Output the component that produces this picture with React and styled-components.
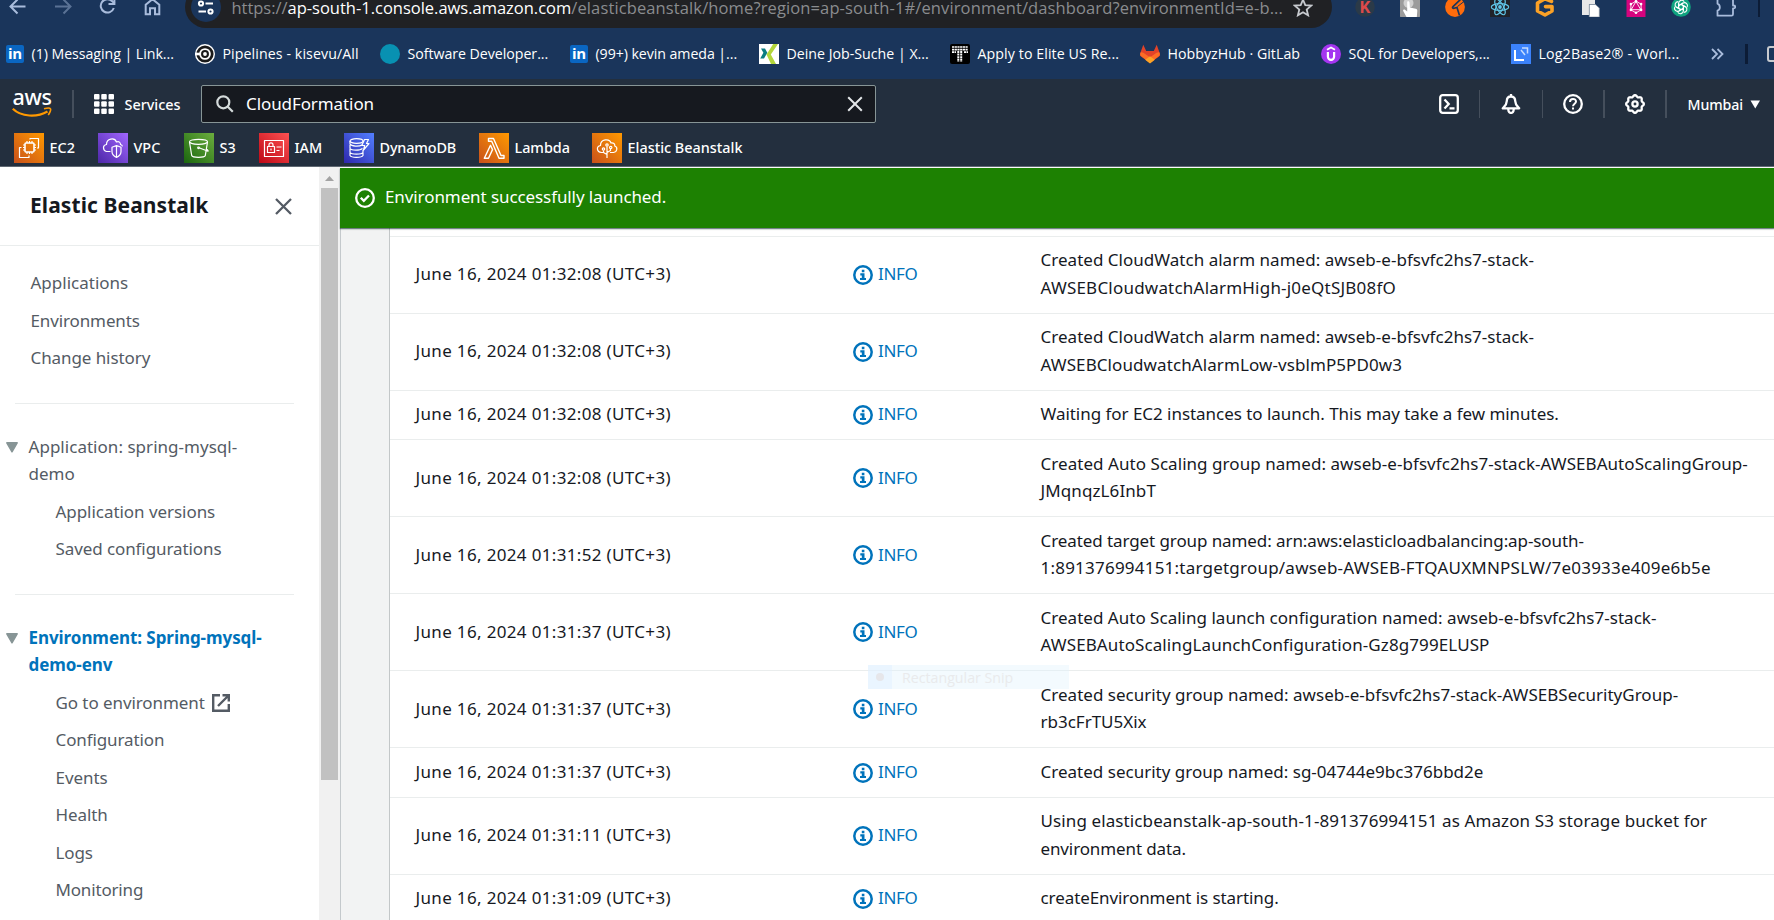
import React from "react";
import styled, { createGlobalStyle, css } from "styled-components";

const GlobalStyle = createGlobalStyle`
  * { box-sizing: border-box; }
  body { margin: 0; background: #fff; overflow: hidden; }
  svg { display: block; flex: none; }
`;

const ember = `"Noto Sans", "Open Sans", sans-serif`;
const segoe = `"Open Sans", "Noto Sans", sans-serif`;

const Page = styled.div`
  position: relative;
  display: flex;
  flex-direction: column;
  width: 1774px;
  height: 920px;
  overflow: hidden;
  background: #fff;
  font-family: ${ember};
`;

const Spaced = styled.span`
  letter-spacing: ${(p) => p.$ls || 0}px;
`;

/* ---------- browser chrome ---------- */

const Toolbar = styled.div`
  flex: none;
  height: 28px;
  overflow: hidden;
  background: #1a355b;
`;

const ToolbarRow = styled.div`
  display: flex;
  align-items: center;
  height: 42px;
  margin-top: -14px;
  padding-left: 8px;
`;

const NavButtons = styled.div`
  display: flex;
  align-items: center;
  gap: 25px;
  width: 177px;
`;

const AddressBar = styled.div`
  display: flex;
  align-items: center;
  width: 1147px;
  height: 42px;
  padding: 0 19px 0 6px;
  border-radius: 21px;
  background: #202124;
  color: #8a8c8f;
  font: 16.5px/42px ${segoe};
  white-space: nowrap;
`;

const SiteInfo = styled.div`
  display: grid;
  place-items: center;
  width: 30px;
  height: 30px;
  margin-right: 10.5px;
  border-radius: 50%;
  background: #1a355b;
`;

const Url = styled.div`
  flex: 1;
  padding-top: 1px;
`;

const Host = styled(Spaced)`
  color: #fff;
`;

const Extensions = styled.div`
  display: flex;
  align-items: center;
  gap: 25.1px;
  margin-left: 23px;
`;

const ToolbarRule = styled.div`
  width: 2px;
  height: 20px;
  margin-left: -3px;
  background: #0c1c36;
`;

const Bookmarks = styled.div`
  flex: none;
  display: flex;
  align-items: center;
  height: 51px;
  padding: 1px 0 0 6px;
  background: #1a355b;
  color: #fff;
  overflow: hidden;
`;

const Bookmark = styled.div`
  flex: 0 0 ${(p) => p.$w}px;
  display: flex;
  align-items: center;
  gap: 7.5px;
  font: 14.2px/20px ${segoe};
  letter-spacing: ${(p) => p.$ls}px;
  white-space: nowrap;
`;

const BookmarkRule = styled.div`
  flex: none;
  width: 3px;
  height: 20px;
  margin: 0 19px 0 21px;
  background: #0c1c36;
`;

const LinkedInBadge = styled.div`
  flex: none;
  width: 18px;
  height: 18px;
  border-radius: 2px;
  background: #0a66c2;
  color: #fff;
  font: 700 15px/16px "Open Sans", sans-serif;
  letter-spacing: -0.3px;
  text-align: center;
`;

/* ---------- AWS header ---------- */

const AwsHeader = styled.header`
  flex: none;
  height: 88px;
  background: #232f3e;
  border-bottom: 1px solid #5f6872;
  color: #fff;
`;

const AwsBar = styled.div`
  display: flex;
  align-items: center;
  height: 50px;
  padding: 0 14px 0 12px;
`;

const Logo = styled.div`
  display: flex;
  flex-direction: column;
  align-items: center;
  width: 40px;
  height: 34px;
  margin-top: -2px;
  font: 500 21.5px/21px ${ember};
  letter-spacing: -0.3px;
`;

const Rule = styled.div`
  width: ${(p) => p.$w || 1}px;
  height: 28px;
  margin: ${(p) => p.$m};
  background: #454f5c;
`;

const ServicesMenu = styled.div`
  display: flex;
  align-items: center;
  gap: 10.5px;
  width: 107px;
  font: 500 14.4px/20px ${ember};
`;

const ServicesLabel = styled.span`
  padding-top: 2px;
`;

const SearchBox = styled.div`
  display: flex;
  align-items: center;
  gap: 12px;
  width: 675px;
  height: 38px;
  padding: 0 12.5px 0 14px;
  border: 1px solid #879596;
  border-radius: 2px;
  background: #16191f;
  font: 17px/20px ${ember};
`;

const SearchText = styled(Spaced)`
  flex: 1;
`;

const Utilities = styled.div`
  display: flex;
  align-items: center;
  margin-left: auto;
  font: 500 14.2px/20px ${ember};
`;

const Region = styled(Spaced)`
  padding-top: 2px;
`;

const Favorites = styled.div`
  display: flex;
  height: 37px;
  padding: 4px 0 0 14px;
`;

const Favorite = styled.div`
  display: flex;
  align-items: center;
  gap: 5.5px;
  width: ${(p) => p.$w}px;
  height: 30px;
  font: 500 14.4px/20px ${ember};
  letter-spacing: ${(p) => p.$ls}px;
  white-space: nowrap;
`;

const Tile = styled.svg.attrs({ width: 30, height: 30, viewBox: "0 0 30 30", fill: "none", stroke: "#fff", strokeWidth: 1.2, strokeLinejoin: "round" })`
  background: linear-gradient(45deg, ${(p) => p.$from}, ${(p) => p.$to});
`;

/* ---------- body ---------- */

const Body = styled.div`
  flex: 1;
  display: flex;
  min-height: 0;
`;

const Sidebar = styled.nav`
  flex: none;
  width: 319px;
  color: #545b64;
  font: 17px/27.5px ${ember};
`;

const SideHeader = styled.div`
  display: flex;
  align-items: center;
  justify-content: space-between;
  height: 79px;
  padding: 0 27.5px 0 30px;
  border-bottom: 1px solid #eaeded;
  color: #16191f;
  font-size: 21px;
  font-weight: 700;
`;

const SideList = styled.div`
  display: flex;
  flex-direction: column;
  gap: 10px;
  padding: ${(p) => p.$p};
`;

const SideItem = styled.div`
  display: flex;
  align-items: center;
  gap: 7px;
  letter-spacing: ${(p) => p.$ls}px;
  white-space: nowrap;
`;

const SideRule = styled.div`
  height: 1px;
  margin: 0 25px 29px 15px;
  background: #eaeded;
`;

const Section = styled.div`
  display: flex;
  gap: 10.5px;
  padding: 0 20px 0 6px;
  letter-spacing: ${(p) => p.$ls}px;
  ${(p) => p.$active && css`
    color: #0073bb;
    font-weight: 700;
  `}
`;

const Caret = styled.svg`
  margin-top: 9.5px;
`;

const Scrollbar = styled.div`
  flex: none;
  width: 21px;
  background: #f1f1f1;
  padding: 9px 2px 0;
`;

const Thumb = styled.div`
  width: 17px;
  height: 592px;
  margin-top: 7px;
  background: #c1c1c1;
`;

const Main = styled.main`
  flex: 1;
  display: flex;
  flex-direction: column;
  min-width: 0;
  padding-top: 1px;
`;

const Banner = styled.div`
  position: relative;
  flex: none;
  display: flex;
  align-items: center;
  gap: 10px;
  height: 60px;
  padding-left: 15px;
  background: #1d8102;
  color: #fff;
  box-shadow: 0 1px 1px rgba(0, 28, 36, 0.45), 0 1px 2px rgba(0, 28, 36, 0.25);
  font: 17px/27px ${ember};
`;

const BannerText = styled(Spaced)`
  padding-bottom: 3px;
`;

const Content = styled.div`
  flex: 1;
  min-height: 0;
  padding-left: 48px;
  border-left: 1px solid #c4c9cc;
  background: #f2f3f3;
`;

const Card = styled.div`
  height: 100%;
  padding-top: 7.75px;
  border-left: 1px solid #c3c7c8;
  background: #fff;
`;

const EventRow = styled.div`
  display: grid;
  grid-template-columns: 437.5px 187.5px 1fr;
  align-items: center;
  padding: 9.7px 0 11.3px 25.5px;
  border-top: 1px solid #eaeded;
  color: #16191f;
  font: 17px/27.5px ${ember};
  white-space: nowrap;
`;

const Level = styled.div`
  display: flex;
  align-items: center;
  gap: 5px;
  color: #0073bb;
  letter-spacing: -0.37px;

  svg {
    margin-top: 2px;
  }
`;

const Line = styled.div`
  letter-spacing: ${(p) => p.$ls}px;
`;

const GhostMenu = styled.div`
  position: absolute;
  left: 868px;
  top: 665px;
  display: flex;
  align-items: center;
  width: 201px;
  height: 24px;
  padding-top: 1px;
  background: rgba(225, 242, 252, 0.4);
  color: #e9eaec;
  font: 14.2px/24px ${segoe};
`;

const GhostIcon = styled.div`
  display: grid;
  place-items: center;
  width: 24px;
  height: 24px;
  margin: -1px 10px 0 0;
  background: rgba(225, 240, 255, 0.5);
`;

const GhostDot = styled.i`
  width: 8px;
  height: 8px;
  border-radius: 50%;
  background: #e6e6ea;
`;

/* ---------- icons ---------- */

const chromeStroke = { fill: "none", stroke: "#a9bcdc", strokeWidth: 2 };

const BackIcon = ({ dim }) => (
  <svg width="20" height="20" viewBox="0 0 20 20" {...chromeStroke} opacity={dim ? 0.45 : 1}>
    {dim ? <path d="M2 9.5h15M10.5 2.5l7 7-7 7" /> : <path d="M17.500 9.5H3M9.5 2.5l-7 7 7 7" />}
  </svg>
);
const ReloadIcon = () => (
  <svg width="20" height="20" viewBox="0 0 20 20" {...chromeStroke}>
    <path d="M15.800 11A6.700 6.700 0 1 1 14.300 4.200L16.600 6.500" /><path d="M16.400 1V7H10.500" />
  </svg>
);
const HomeIcon = () => (
  <svg width="20" height="20" viewBox="0 0 20 20" {...chromeStroke}>
    <path d="M2.700 17.200V7.800L9.500 2.2l6.800 5.600v9.400h-4.300v-6h-5v6z" />
  </svg>
);
const TuneIcon = () => (
  <svg width="18" height="18" viewBox="0 0 18 18" fill="none" stroke="#fff" strokeWidth="2">
    <circle cx="4" cy="5.500" r="2.1" /><path d="M8.500 5.500H16M1.500 13.500H9" /><circle cx="13.500" cy="13.500" r="2.100" />
  </svg>
);
const StarIcon = () => (
  <svg width="20" height="20" viewBox="0 0 20 20" fill="none" stroke="#c7cacf" strokeWidth="1.8">
    <path d="M10 2.700l2.300 5.400 5.900.5-4.500 3.900 1.400 5.800L10 15.200l-5.100 3.100 1.400-5.800L1.800 8.600l5.900-.5z" />
  </svg>
);
const Ext = ({ children }) => <svg width="20" height="20" viewBox="0 0 20 20">{children}</svg>;

const ExtensionIcons = () => (
  <Extensions>
    <Ext>
      <circle cx="10" cy="10" r="9.800" fill="#2b3a48" />
      <text x="10" y="16" textAnchor="middle" fontFamily="Roboto" fontWeight="700" fontSize="16.500" fill="#dc4a4a">K</text>
    </Ext>
    <Ext>
      <rect width="20" height="20.500" rx="1.500" fill="#9b9b9b" />
      <circle cx="8.500" cy="6" r="5" fill="#d0d0d0" />
      <path d="M7.200 4.800c.8-.8 2.200-.5 2.300.8l.4 4.800 5.800 1.300c1.200.3 1.700 1 1.600 2.200l-.5 6.100H6.500l-3.300-6c-.5-1.200.9-1.900 1.800-1.200l2.200 1.700z" fill="#fff" />
    </Ext>
    <Ext>
      <circle cx="10" cy="10" r="9.900" fill="#ff6c0c" />
      <path d="M15.500 2.500L8 9.600c-1 1 0 2 1 1.700l3-.8 2.500 8" fill="none" stroke="#1a355b" strokeWidth="1.700" />
      <path d="M12.500 9.500L19 4.500" fill="none" stroke="#1a355b" strokeWidth="1" />
    </Ext>
    <Ext>
      <rect y="-.5" width="20" height="21" rx="1.500" fill="#20232a" />
      <g fill="none" stroke="#61c7e8" strokeWidth="1.200">
        <ellipse cx="10" cy="10" rx="8.700" ry="3.400" />
        <ellipse cx="10" cy="10" rx="8.700" ry="3.400" transform="rotate(60 10 10)" />
        <ellipse cx="10" cy="10" rx="8.700" ry="3.400" transform="rotate(120 10 10)" />
      </g>
      <circle cx="10" cy="10" r="1.900" fill="#61c7e8" />
    </Ext>
    <Ext>
      <path d="M16.500 4.400L10 1.800 2.500 6v8L10 18l7-4V9.600h-6.500" fill="none" stroke="#fba126" strokeWidth="3.600" strokeLinejoin="round" strokeLinecap="round" />
    </Ext>
    <Ext>
      <path d="M2 2h4.500V0h4v2H15v5H9v11H2z" fill="#e8e8e8" />
      <path d="M9.300 7.500h6l4 3.500v9h-10z" fill="#fff" stroke="#8d96a3" strokeWidth=".7" />
    </Ext>
    <Ext>
      <rect x=".5" y="-.5" width="19" height="21" fill="#d6047e" />
      <path d="M10 4.200l5.100 2.900v5.800L10 15.800l-5.100-2.900V7.100zM10 4.500l4.800 8.200H5.200z" fill="none" stroke="#fff" strokeWidth=".9" />
      <g fill="#fff"><circle cx="10" cy="4.200" r="1.300" /><circle cx="15.100" cy="7.100" r="1.300" /><circle cx="15.100" cy="12.900" r="1.300" /><circle cx="10" cy="15.800" r="1.300" /><circle cx="4.900" cy="12.900" r="1.300" /><circle cx="4.900" cy="7.100" r="1.300" /></g>
    </Ext>
    <Ext>
      <circle cx="10" cy="10" r="9.800" fill="#0fa37f" />
      <g fill="none" stroke="#fff" strokeWidth="1.100">
        {[0, 60, 120, 180, 240, 300].map((a) => (
          <path key={a} transform={`rotate(${a} 10 10)`} d="M7.600 11.400V6.200a3 3 0 0 1 5.600-1.400M7.600 8.700l4.600-2.600" />
        ))}
      </g>
    </Ext>
    <Ext>
      <path d="M1.500 1H15.500a1.500 1.500 0 0 1 1.500 1.500V8.500h.8a1.300 1.300 0 0 1 0 2.800H17v5.900a1.500 1.500 0 0 1-1.500 1.500H1.500v-5a3.800 3.800 0 0 0 0-7z" fill="none" stroke="#a9bcdc" strokeWidth="1.800" strokeLinejoin="round" />
    </Ext>
    <ToolbarRule />
  </Extensions>
);

const LinkedIn = () => <LinkedInBadge>in</LinkedInBadge>;

const CircleCi = () => (
  <Ext>
    <circle cx="10" cy="10" r="10" fill="#fff" />
    <circle cx="10" cy="10" r="8.600" fill="#1a1a1a" />
    <circle cx="10" cy="10" r="4.900" fill="none" stroke="#fff" strokeWidth="1.900" />
    <path d="M0 8.700h6v2.600H0z" fill="#fff" />
    <circle cx="10" cy="10" r="1.900" fill="#fff" />
  </Ext>
);
const Xing = () => (
  <Ext>
    <rect width="20" height="20" fill="#fff" />
    <path d="M14.200 0H19L11.800 10.500 17 20h-5L7.500 10.500z" fill="#b3d63b" />
    <path d="M2 4.500h4L8.300 8.700 5 14.500H1.200L4.400 8.700z" fill="#0b7d81" />
  </Ext>
);
const Turing = () => (
  <Ext>
    <rect width="20" height="20" rx="2" fill="#000" />
    <g stroke="#fff" fill="none">
      <path d="M2 3h16M2 5.600h16M2 8.200h4M14 8.200h4" strokeWidth="1.700" strokeDasharray="2.200 .5" />
      <path d="M8.300 7v11M11.200 7v11" strokeWidth="2" strokeDasharray="2 .6" />
    </g>
  </Ext>
);
const GitLab = () => (
  <Ext>
    <path d="M10 19L1 12.500c-1-.8-1.200-2-.8-3.300L3.300.8 6.200 7h7.600L16.700.8l3.100 8.400c.4 1.300.2 2.500-.8 3.300z" fill="#e24329" />
    <path d="M10 19L.4 11.500C0 10 .3 8.500 1 8.200c2 0 3.500 1 9 5.300 5.500-4.300 7-5.300 9-5.300.7.300 1 1.800.6 3.300z" fill="#fc6d26" />
    <path d="M10 19.500l-4.800-3.800L10 12.200l4.800 3.500z" fill="#fca326" />
  </Ext>
);
const Udemy = () => (
  <Ext>
    <circle cx="10" cy="10" r="10" fill="#a435f0" />
    <path d="M6.900 8v4.700a3.100 3.100 0 0 0 6.200 0V8" fill="none" stroke="#fff" strokeWidth="2.200" />
    <path d="M6 5.800L10 3.400l4 2.400" fill="none" stroke="#fff" strokeWidth="1.700" />
  </Ext>
);
const LogBase = () => (
  <Ext>
    <rect width="20" height="20" fill="#3b82fb" />
    <path d="M4 6v10h9" fill="none" stroke="#fff" strokeWidth="2" />
    <path d="M11 4h5.500v5.500M10 6l4 5" fill="none" stroke="#c5dcff" strokeWidth="1.500" />
  </Ext>
);

const bookmarks = [
  { icon: <LinkedIn />, text: "(1) Messaging | Link...", w: 189, ls: -0.05 },
  { icon: <CircleCi />, text: "Pipelines - kisevu/All", w: 185, ls: 0.09 },
  { icon: <Ext><circle cx="10" cy="10" r="10" fill="#0891b2" /></Ext>, text: "Software Developer...", w: 190, ls: -0.04 },
  { icon: <LinkedIn />, text: "(99+) kevin ameda |...", w: 189, ls: -0.07 },
  { icon: <Xing />, text: "Deine Job-Suche | X...", w: 191, ls: 0 },
  { icon: <Turing />, text: "Apply to Elite US Re...", w: 190, ls: 0.09 },
  { icon: <GitLab />, text: "HobbyzHub · GitLab", w: 181, ls: 0.03 },
  { icon: <Udemy />, text: "SQL for Developers,...", w: 190, ls: -0.04 },
  { icon: <LogBase />, text: "Log2Base2® - Worl...", w: 200, ls: 0.16 },
];

const favorites = [
  {
    name: "EC2", w: 84, from: "#c8511b", to: "#ff9900",
    art: (
      <>
        <rect x="11" y="10" width="9" height="9" rx="1" strokeWidth="1.600" />
        <path d="M13 8v2M15.500 8v2M18 8v2M13 19v2M15.500 19v2M18 19v2M9 12h2M9 14.500h2M9 17h2M20 12h2M20 14.500h2M20 17h2" />
        <path d="M16 6.500V5.500H24.500V15H23M7.500 14.500H5.500V24.500H15V22.500" />
      </>
    ),
  },
  {
    name: "VPC", w: 86, from: "#4d27a8", to: "#a166ff",
    art: (
      <>
        <path d="M12.500 18.500H8.500C4.500 17.500 4.500 12 8.500 11.500 8.500 5.500 16.500 4 18.500 9c2.500-1 4 .5 4 2.500 1 .2 1.700.8 2 1.800" />
        <path d="M18.500 12.500l4.500 1.800v4.500c0 3-2 4.500-4.500 5.700-2.500-1.200-4.500-2.700-4.500-5.700v-4.500zM18.500 13v11" />
      </>
    ),
  },
  {
    name: "S3", w: 75, from: "#1b660f", to: "#6cae3e",
    art: (
      <>
        <ellipse cx="14.500" cy="8.800" rx="9" ry="2.500" />
        <path d="M5.500 9l2.200 13.500c1 2.400 12.600 2.400 13.600 0L23.500 9M15 14.800l9 3.500c.5-.8-.5-1.500-2-2.200" />
        <circle cx="14.500" cy="14.800" r=".8" />
      </>
    ),
  },
  {
    name: "IAM", w: 85, from: "#bd0816", to: "#ff5252",
    art: (
      <>
        <rect x="5.500" y="7.500" width="19" height="16" />
        <rect x="8.500" y="13.500" width="7" height="6" />
        <path d="M10 13.500v-1.700a2 2 0 0 1 4 0v1.700M12 15.500v2M17.500 14h5M17.500 17.500h3" />
      </>
    ),
  },
  {
    name: "DynamoDB", w: 135, ls: -0.14, from: "#2e27ad", to: "#527fff",
    art: (
      <>
        <ellipse cx="12.500" cy="8" rx="6.500" ry="2.300" />
        <path d="M6 8v3.200c1.500 2.200 9 2.600 12 .7M6 12v3.500c1.500 2.200 10 2.200 12.500 0M6 16v3.500c1.500 2.200 11.500 2.200 13 0V17M6 20v2.500c1.500 2.500 11.500 2.500 13 0V20" />
        <path d="M20.500 6.500h4l-2 4h2.500l-5.500 6.500 1.200-4.500h-2.900z" />
      </>
    ),
  },
  {
    name: "Lambda", w: 113, ls: -0.05, from: "#c8511b", to: "#ff9900",
    art: <path d="M9.500 5.500h5l7.500 17h3v2.700h-5L12.700 8.300H9.500zM11.500 12.300l2 4.300-4 8.600H5.300z" strokeWidth="1.400" />,
  },
  {
    name: "Elastic Beanstalk", w: 160, from: "#c8511b", to: "#ff9900",
    art: (
      <>
        <path d="M12 19.500H9.500C4.500 19 4 13.500 8.500 12.500 8.500 6 17.500 5 19 10c2.500-.5 4 1 3.800 3 3.200 1.200 2.500 6-1.300 6.500H18" />
        <path d="M15 25V13.500M15 21.500l-3.500-2v-2M15 19.500l3.500-2v-2" />
        <circle cx="15" cy="12" r="1.200" /><circle cx="11.500" cy="16" r="1.200" /><circle cx="18.700" cy="14.500" r="1.200" />
      </>
    ),
  },
];

const util = { width: 20, height: 20, viewBox: "0 0 20 20", fill: "none", stroke: "#fff", strokeWidth: 2.3 };
const TerminalIcon = () => (
  <svg {...util}><rect x="1.200" y="1.200" width="17.600" height="17.600" rx="2.500" /><path d="M5.500 5.500L9.700 10l-4.200 4.500M10.500 14.300H15.500" /></svg>
);
const BellIcon = () => (
  <svg {...util} strokeLinejoin="round"><path d="M10 0v2.500M10 2.500c-3 0-4.200 2-4.200 4.500 0 3.500-1.300 4.500-4 7.300h16.400c-2.700-2.800-4-3.800-4-7.300 0-2.500-1.200-4.500-4.200-4.500zM7.300 15c-.2 5.300 5.600 5.300 5.400 0" /></svg>
);
const HelpIcon = () => (
  <svg {...util}><circle cx="10" cy="10" r="8.800" /><path d="M7 8c0-4 6-4 6-.5 0 2.200-3 2.200-3 4.800M10 13.600v2" strokeWidth="2" /></svg>
);
const gearPath = Array.from({ length: 64 }, (_, i) => {
  const a = (i / 64) * Math.PI * 2;
  const r = 8.1 + 0.8 * Math.cos(a * 8);
  return `${i ? "L" : "M"}${(10 + r * Math.cos(a)).toFixed(2)} ${(10 + r * Math.sin(a)).toFixed(2)}`;
}).join("") + "z";
const GearIcon = () => (
  <svg {...util} strokeLinejoin="round"><path d={gearPath} /><circle cx="10" cy="10" r="2.600" /></svg>
);
const InfoIcon = () => (
  <svg width="20" height="20" viewBox="0 0 20 20" fill="none" stroke="#0073bb">
    <circle cx="10" cy="10" r="8.700" strokeWidth="2.500" />
    <path d="M8.800 4.700h2.600v2.500H8.800zM7.300 8.200h4.200v4.700h1.500v2.200H7v-2.200h1.800v-2.500H7.300z" fill="#0073bb" stroke="none" />
  </svg>
);
const SectionCaret = () => (
  <Caret width="12" height="11" viewBox="0 0 12 11"><path d="M.8.800h10.400L6 9.800z" fill="#879596" stroke="#879596" strokeWidth="1.400" strokeLinejoin="round" /></Caret>
);

const envLinks = [
  ["Configuration", -0.1], ["Events", -0.06], ["Health", -0.1], ["Logs", -0.1], ["Monitoring", -0.17],
];

const events = [
  { time: "01:32:08", lines: [["Created CloudWatch alarm named: awseb-e-bfsvfc2hs7-stack-", 0.02], ["AWSEBCloudwatchAlarmHigh-j0eQtSJB08fO", 0.21]] },
  { time: "01:32:08", lines: [["Created CloudWatch alarm named: awseb-e-bfsvfc2hs7-stack-", 0.02], ["AWSEBCloudwatchAlarmLow-vsblmP5PD0w3", 0.09]] },
  { time: "01:32:08", lines: [["Waiting for EC2 instances to launch. This may take a few minutes.", -0.04]] },
  { time: "01:32:08", lines: [["Created Auto Scaling group named: awseb-e-bfsvfc2hs7-stack-AWSEBAutoScalingGroup-", 0.05], ["JMqnqzL6InbT", 0.1]] },
  { time: "01:31:52", lines: [["Created target group named: arn:aws:elasticloadbalancing:ap-south-", -0.09], ["1:891376994151:targetgroup/awseb-AWSEB-FTQAUXMNPSLW/7e03933e409e6b5e", 0.22]] },
  { time: "01:31:37", lines: [["Created Auto Scaling launch configuration named: awseb-e-bfsvfc2hs7-stack-", 0.02], ["AWSEBAutoScalingLaunchConfiguration-Gz8g799ELUSP", 0.1]] },
  { time: "01:31:37", lines: [["Created security group named: awseb-e-bfsvfc2hs7-stack-AWSEBSecurityGroup-", 0.02], ["rb3cFrTU5Xix", -0.01]] },
  { time: "01:31:37", lines: [["Created security group named: sg-04744e9bc376bbd2e", 0.01]] },
  { time: "01:31:11", lines: [["Using elasticbeanstalk-ap-south-1-891376994151 as Amazon S3 storage bucket for", 0.11], ["environment data.", -0.12]] },
  { time: "01:31:09", lines: [["createEnvironment is starting.", -0.08]] },
];

export default function App() {
  return (
    <Page>
      <GlobalStyle />
      <Toolbar>
        <ToolbarRow>
          <NavButtons><BackIcon /><BackIcon dim /><ReloadIcon /><HomeIcon /></NavButtons>
          <AddressBar>
            <SiteInfo><TuneIcon /></SiteInfo>
            <Url>
              <Spaced $ls={-0.03}>https://</Spaced>
              <Host $ls={-0.01}>ap-south-1.console.aws.amazon.com</Host>
              <Spaced $ls={0.12}>/elasticbeanstalk/home?region=ap-south-1#/environment/dashboard?environmentId=e-b...</Spaced>
            </Url>
            <StarIcon />
          </AddressBar>
          <ExtensionIcons />
        </ToolbarRow>
      </Toolbar>
      <Bookmarks>
        {bookmarks.map((b) => (
          <Bookmark key={b.text} $w={b.w} $ls={b.ls}>{b.icon}{b.text}</Bookmark>
        ))}
        <svg width="13" height="12" viewBox="0 0 13 12" {...chromeStroke} strokeWidth="1.800"><path d="M1 1l5 5-5 5M6.500 1l5 5-5 5" /></svg>
        <BookmarkRule />
        <svg width="20" height="16" viewBox="0 0 20 16" fill="none" stroke="#c7cacf" strokeWidth="2"><rect x="1" y="1" width="18" height="14" rx="2" /></svg>
      </Bookmarks>

      <AwsHeader>
        <AwsBar>
          <Logo>
            aws
            <svg width="40" height="11" viewBox="0 0 40 11" fill="none" stroke="#ff9900" strokeWidth="2.200">
              <path d="M.8 1.800C9 10 25 10.500 35.500 4.500" /><path d="M32 1.800c3-.8 6-.8 6.500 0s-.5 4-2.300 6.200" strokeWidth="1.600" />
            </svg>
          </Logo>
          <Rule $w={2} $m="0 20px" />
          <ServicesMenu>
            <svg width="20" height="20" viewBox="0 0 20 20" fill="#fff">
              {[0, 7.250, 14.500].map((y) => [0, 7.250, 14.500].map((x) => <rect key={`${x}-${y}`} x={x} y={y} width="5.500" height="5.500" rx="1" />))}
            </svg>
            <ServicesLabel>Services</ServicesLabel>
          </ServicesMenu>
          <SearchBox>
            <svg width="18" height="18" viewBox="0 0 18 18" fill="none" stroke="#d5dbdb" strokeWidth="2.200"><circle cx="7.300" cy="7.300" r="6" /><path d="M11.500 11.500l5.300 5.300" /></svg>
            <SearchText $ls={-0.09}>CloudFormation</SearchText>
            <svg width="16" height="16" viewBox="0 0 16 16" fill="none" stroke="#e3e6e8" strokeWidth="2"><path d="M1.200 1.200l13.600 13.600M14.800 1.200L1.200 14.800" /></svg>
          </SearchBox>
          <Utilities>
            <TerminalIcon /><Rule $m="0 21px 0 20px" />
            <BellIcon /><Rule $m="0 20px 0 21px" />
            <HelpIcon /><Rule $w={2} $m="0 20px" />
            <GearIcon /><Rule $w={2} $m="0 21px 0 20px" />
            <Region $ls={-0.1}>Mumbai</Region>
            <svg width="17" height="9" viewBox="0 0 17 9"><path d="M7.500.500h9.500l-4.750 8z" fill="#fff" /></svg>
          </Utilities>
        </AwsBar>
        <Favorites>
          {favorites.map((f) => (
            <Favorite key={f.name} $w={f.w} $ls={f.ls || 0}>
              <Tile $from={f.from} $to={f.to}>{f.art}</Tile>
              {f.name}
            </Favorite>
          ))}
        </Favorites>
      </AwsHeader>

      <Body>
        <Sidebar>
          <SideHeader>
            <Spaced $ls={0.08}>Elastic Beanstalk</Spaced>
            <svg width="17" height="17" viewBox="0 0 17 17" fill="none" stroke="#545b64" strokeWidth="2.300"><path d="M1 1l15 15M16 1L1 16" /></svg>
          </SideHeader>
          <SideList $p="23.3px 0 31px 30.5px">
            <SideItem $ls={0}>Applications</SideItem>
            <SideItem $ls={-0.12}>Environments</SideItem>
            <SideItem $ls={-0.08}>Change history</SideItem>
          </SideList>
          <SideRule />
          <Section $ls={0.03}><SectionCaret /><div>Application: spring-mysql-<br />demo</div></Section>
          <SideList $p="10px 0 31px 55.5px">
            <SideItem $ls={-0.05}>Application versions</SideItem>
            <SideItem $ls={-0.09}>Saved configurations</SideItem>
          </SideList>
          <SideRule />
          <Section $active $ls={-0.06}><SectionCaret /><div>Environment: Spring-mysql-<br />demo-env</div></Section>
          <SideList $p="10px 0 0 55.5px">
            <SideItem $ls={-0.08}>
              Go to environment
              <svg width="18" height="18" viewBox="0 0 18 18" fill="none" stroke="#545b64" strokeWidth="2.400"><path d="M8 1.200H1.200v15.600h15.600V10M10.500 1.200h6.300V7.500M16.500 1.500L6 12" /></svg>
            </SideItem>
            {envLinks.map(([t, ls]) => <SideItem key={t} $ls={ls}>{t}</SideItem>)}
          </SideList>
        </Sidebar>
        <Scrollbar>
          <svg width="17" height="5" viewBox="0 0 17 5"><path d="M4 5L8.500 0 13 5z" fill="#a3a3a3" /></svg>
          <Thumb />
        </Scrollbar>
        <Main>
          <Banner>
            <svg width="20" height="20" viewBox="0 0 20 20" fill="none" stroke="#fff" strokeWidth="2.300"><circle cx="10" cy="10" r="8.800" /><path d="M5.800 9.800l3 3 5.200-5.300" /></svg>
            <BannerText $ls={-0.09}>Environment successfully launched.</BannerText>
          </Banner>
          <Content>
            <Card>
              {events.map((e, i) => (
                <EventRow key={i}>
                  <Spaced $ls={0.34}>June 16, 2024 {e.time} (UTC+3)</Spaced>
                  <Level><InfoIcon />INFO</Level>
                  <div>{e.lines.map(([t, ls]) => <Line key={t} $ls={ls}>{t}</Line>)}</div>
                </EventRow>
              ))}
            </Card>
          </Content>
        </Main>
      </Body>
      <GhostMenu><GhostIcon><GhostDot /></GhostIcon>Rectangular Snip</GhostMenu>
    </Page>
  );
}
